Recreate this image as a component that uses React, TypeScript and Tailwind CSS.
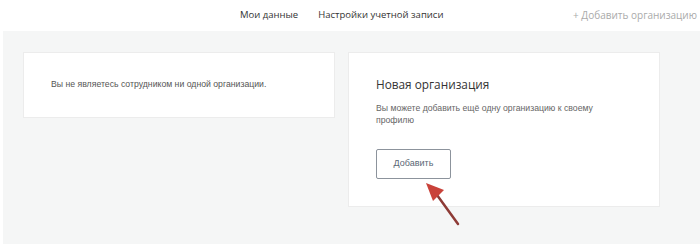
export default function App() {
  return (
    <div className="relative w-[700px] h-[244px] overflow-hidden bg-white font-['Open_Sans',sans-serif]">
      <header className="h-[31px] flex items-center text-[9.5px] text-[#333]">
        <nav className="flex items-center gap-[20px] ml-[240px]">
          <span>Мои данные</span>
          <span>Настройки учетной записи</span>
        </nav>
        <span className="ml-auto mr-[3px] text-[10px] text-[#aaa]">+ Добавить организацию</span>
      </header>

      <main className="h-[213px] bg-[#f5f6f6] border-l-[3px] border-white flex items-start gap-[13px] pl-[20px] pt-[21px]">
        <div className="w-[312px] h-[66px] bg-white border border-[#ececec] flex items-center pl-[27px]">
          <p className="text-[8.7px] text-[#555] font-['Liberation_Sans',sans-serif]">
            Вы не являетесь сотрудником ни одной организации.
          </p>
        </div>

        <div className="w-[312px] h-[155px] bg-white border border-[#ececec] pl-[27px] pt-[23px]">
          <h2 className="text-[11.8px] leading-[16px] text-[#333]">Новая организация</h2>
          <p className="mt-[10px] w-[230px] text-[8.7px] leading-[12px] text-[#666] font-['Liberation_Sans',sans-serif]">
            Вы можете добавить ещё одну организацию к своему профилю
          </p>
          <button className="mt-[23px] w-[75px] h-[30px] border border-[#8c939c] rounded-[2px] text-[9px] text-[#5b6775] font-['Liberation_Sans',sans-serif]">
            Добавить
          </button>
        </div>
      </main>

      <svg className="absolute left-[420px] top-[178px]" width="50" height="55" viewBox="0 0 50 55">
        <line x1="17" y1="17" x2="38" y2="46" stroke="#8e3b36" strokeWidth="2.5" strokeLinecap="round" />
        <polygon points="6,5 24,12 13,23" fill="#c9423a" />
      </svg>
    </div>
  )
}
